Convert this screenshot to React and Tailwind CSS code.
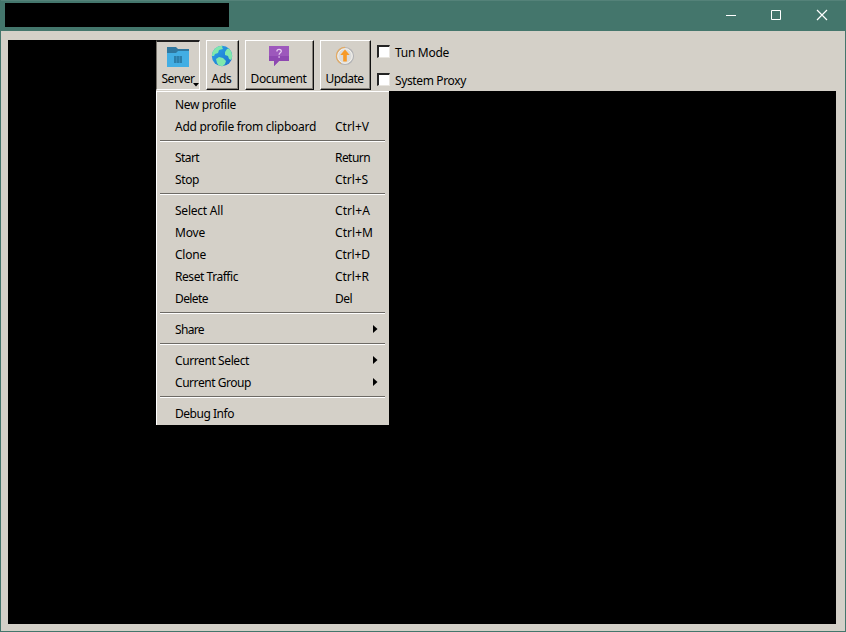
import React from "react";

const MENU = [
  { label: "New profile", w: 61 },
  { label: "Add profile from clipboard", w: 141, keys: "Ctrl+V", kw: 34 },
  null,
  { label: "Start", w: 24, keys: "Return", kw: 35 },
  { label: "Stop", w: 24, keys: "Ctrl+S", kw: 33 },
  null,
  { label: "Select All", w: 48, keys: "Ctrl+A", kw: 35 },
  { label: "Move", w: 30, keys: "Ctrl+M", kw: 38 },
  { label: "Clone", w: 31, keys: "Ctrl+D", kw: 35 },
  { label: "Reset Traffic", w: 63, keys: "Ctrl+R", kw: 34 },
  { label: "Delete", w: 33, keys: "Del", kw: 17 },
  null,
  { label: "Share", w: 29, sub: true },
  null,
  { label: "Current Select", w: 74, sub: true },
  { label: "Current Group", w: 76, sub: true },
  null,
  { label: "Debug Info", w: 59 },
];

// Sets the text's tracking so that it fills the given width.
function Fit({ w, children }) {
  const ref = React.useRef(null);
  const [sp, setSp] = React.useState(0);
  React.useLayoutEffect(() => {
    const natural = ref.current.getBoundingClientRect().width;
    setSp((w - natural) / children.length);
  }, []);
  return (
    <span ref={ref} className="inline-block whitespace-pre" style={{ letterSpacing: sp + "px" }}>
      {children}
    </span>
  );
}

function FolderIcon() {
  return (
    <svg width="24" height="22" viewBox="0 0 24 22">
      <path d="M1 1h9l2 2h11v8H1z" fill="#2f78a0" />
      <path d="M1 7h9l2-2h11v16H1z" fill="#42aee4" />
      <path d="M8 10h8v7H8z" fill="#2b7fab" />
      <path d="M10.5 10v7M13.5 10v7" stroke="#3c97c8" strokeWidth="0.7" />
    </svg>
  );
}

function GlobeIcon() {
  return (
    <svg width="22" height="22" viewBox="0 0 22 22">
      <defs>
        <linearGradient id="sea" x1="0" y1="0" x2="1" y2="1">
          <stop offset="0" stopColor="#2ba5e8" />
          <stop offset="1" stopColor="#1a6fcd" />
        </linearGradient>
        <clipPath id="ball"><circle cx="11" cy="11" r="10.2" /></clipPath>
      </defs>
      <circle cx="11" cy="11" r="10.2" fill="url(#sea)" />
      <g clipPath="url(#ball)" fill="#80e8ad">
        <path d="M0 10 2 4 7 0h5l-1 2 1 2-4 1-1 3-3 1-1 2-3 0z" />
        <path d="m5 14 3-2 4 1 3 3-1 3-3 3-3-1-2-3z" />
        <path d="m14 7 2-3 3-1 3 4v6l-2 2-2-1-1-3-3-1z" />
      </g>
    </svg>
  );
}

function QuestionIcon() {
  return (
    <svg width="22" height="22" viewBox="0 0 22 22">
      <path d="M1 1h20v15H11l-5 5v-5H1z" fill="#9d58bc" />
      <path d="M1 11h20v5H11l-5 5v-5H1z" fill="#8e48b1" />
      <path d="M8.9 6.4c0-2.6 4.4-2.6 4.4-.2 0 1.6-2.2 1.7-2.2 3.6M11.1 11.2v1.5" fill="none" stroke="#e6cdf0" strokeWidth="1.3" />
    </svg>
  );
}

function UpdateIcon() {
  return (
    <svg width="20" height="22" viewBox="0 0 20 22">
      <circle cx="10" cy="11" r="8.5" fill="#dbdcdc" stroke="#b3b3b5" strokeWidth="1.2" />
      <path d="M10 2.5a8.5 8.5 0 0 0-4 16" fill="none" stroke="#e6ab62" strokeWidth="1.3" />
      <circle cx="10" cy="11" r="7.2" fill="none" stroke="#f5f2ea" strokeWidth="1" />
      <path d="m10 4.5 4.7 5.5h-2.9v6.5H8.2V10H5.3z" fill="#f79a27" />
    </svg>
  );
}

function ToolButton({ icon, label, w, className }) {
  return (
    <button className={"flex h-[50px] shrink-0 flex-col items-center border-t border-l border-r border-b border-t-white border-l-white border-r-[#101010] border-b-[#101010] pt-1 pr-[2px] shadow-[inset_-1px_-1px_0_#86827b] " + className}>
      <span className="flex h-[22px] items-center">{icon}</span>
      <span className="mt-[3px] h-[18px] leading-[18px]"><Fit w={w}>{label}</Fit></span>
    </button>
  );
}

function Check({ label, w }) {
  return (
    <label className="flex h-7 items-center">
      <span className="-mt-[3px] size-[13px] border-t-2 border-l-2 border-r border-b border-t-[#242424] border-l-[#242424] border-r-[#e8e5df] border-b-[#e8e5df] bg-white" />
      <span className="ml-[5px]"><Fit w={w}>{label}</Fit></span>
    </label>
  );
}

export default function App() {
  return (
    <div className="relative flex h-[632px] w-[846px] flex-col overflow-hidden border-x border-b border-[#44766c] bg-[#d4d0c8] font-['Noto_Sans',sans-serif] text-[12px] leading-[16px] text-black">
      <header className="flex h-[31px] shrink-0 items-start border-t border-[#548279] bg-[#44766c]">
        <div className="mt-[2px] ml-1 h-6 w-[224px] bg-black" />
        <svg className="ml-auto" width="138" height="30" viewBox="707 1 138 30" fill="none" stroke="white">
          <path d="M726 15.5h10" />
          <path d="M771.5 10.5h9v9h-9z" />
          <path d="m817 10 10 10m0-10-10 10" strokeWidth="1.2" />
        </svg>
      </header>
      <div className="mt-[9px] flex h-[51px] shrink-0 items-start pl-[7px]">
        <div className="h-[51px] w-[148px] shrink-0 bg-black" />
        <button className="relative flex h-[50px] w-11 shrink-0 flex-col items-center border-t-2 border-l border-r border-b border-t-[#202020] border-l-[#77736c] border-r-white border-b-white pt-1">
          <FolderIcon />
          <span className="mt-[2px] h-[18px] leading-[18px]"><Fit w={33}>Server</Fit></span>
          <svg className="absolute right-0 bottom-[2px]" width="6" height="4" viewBox="0 0 6 4"><path d="M0 0h6L3 3.5z" /></svg>
        </button>
        <ToolButton icon={<GlobeIcon />} label="Ads" w={20} className="ml-[6px] w-[33px]" />
        <ToolButton icon={<QuestionIcon />} label="Document" w={56} className="ml-[6px] w-[69px]" />
        <ToolButton icon={<UpdateIcon />} label="Update" w={38} className="ml-[6px] w-[51px]" />
        <div className="-mt-[1px] ml-[6px] flex flex-col">
          <Check label="Tun Mode" w={54} />
          <Check label="System Proxy" w={71} />
        </div>
      </div>
      <main className="mr-[9px] ml-[7px] h-[533px] shrink-0 bg-black" />
      <nav className="absolute top-[91px] left-[155px] flex w-[233px] flex-col border-t border-l border-white bg-[#d4d0c8] pt-[2px]">
        {MENU.map((item, i) =>
          item ? (
            <div key={i} className="flex h-[22px] items-center pl-[18px]">
              <span className="w-[160px]"><Fit w={item.w}>{item.label}</Fit></span>
              {item.keys && <Fit w={item.kw}>{item.keys}</Fit>}
              {item.sub && (
                <svg className="mb-[2px] ml-[38px]" width="5" height="8" viewBox="0 0 5 8"><path d="M0 0v8l4.5-4z" /></svg>
              )}
            </div>
          ) : (
            <div key={i} className="h-[9px] pt-[2px] pr-1 pl-[3px]">
              <div className="h-[2px] border-t border-b border-t-[#6d6a65] border-b-white" />
            </div>
          )
        )}
      </nav>
    </div>
  );
}
